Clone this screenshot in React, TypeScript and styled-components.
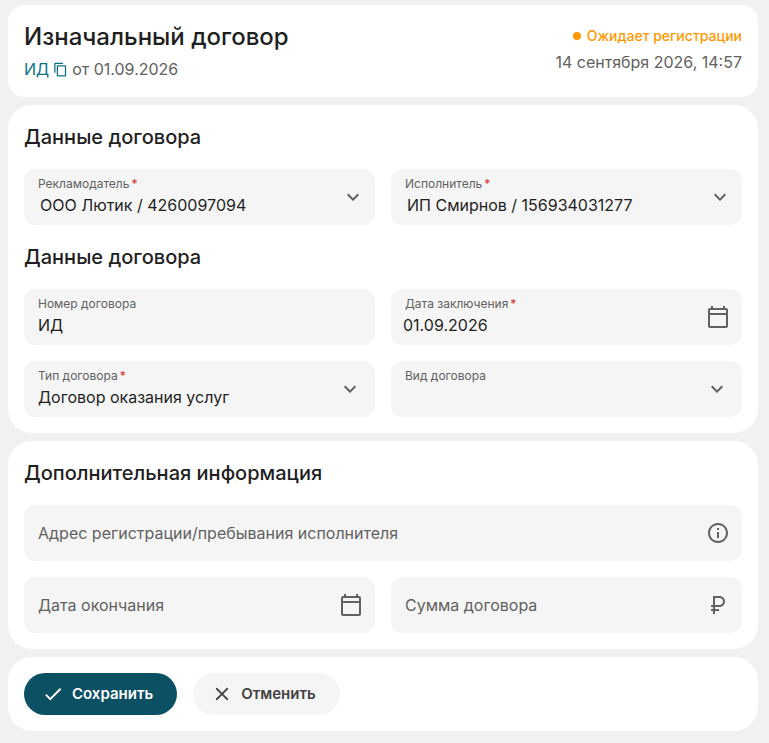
import React, { useId, useState } from "react";
import styled, { createGlobalStyle } from "styled-components";

const GlobalStyle = createGlobalStyle`
  *, *::before, *::after { box-sizing: border-box; }
  body {
    margin: 0;
    background: #f1f1f1;
    color: #1f1f1f;
    font-family: Inter, "Liberation Sans", sans-serif;
    font-size: 16px;
    line-height: 24px;
  }
`;

const Page = styled.main`
  display: flex;
  flex-direction: column;
  gap: 8px;
  padding: 5px 11px 12px 8px;
`;

const Card = styled.section`
  display: flex;
  flex-direction: column;
  gap: 16px;
  padding: 16px;
  border-radius: 24px;
  background: #fff;
`;

const HeaderCard = styled.header`
  display: flex;
  justify-content: space-between;
  gap: 16px;
  padding: 16px;
  border-radius: 16px;
  background: #fff;
`;

const HeaderColumn = styled.div<{ $end?: boolean }>`
  display: flex;
  flex-direction: column;
  align-items: ${({ $end }) => ($end ? "flex-end" : "flex-start")};
  gap: ${({ $end }) => ($end ? 2 : 4)}px;
  padding-top: ${({ $end }) => ($end ? 3 : 0)}px;
`;

const Title = styled.h1`
  margin: 0;
  font-size: 24px;
  font-weight: 500;
  line-height: 32px;
`;

const Subtitle = styled.div`
  display: flex;
  align-items: center;
  gap: 4px;
  color: #616161;
`;

const ContractLink = styled.a`
  color: #0b7285;
  text-decoration: none;
`;

const CopyButton = styled.button`
  display: flex;
  padding: 0;
  border: 0;
  background: none;
  color: #0b7285;
  cursor: pointer;
`;

const Status = styled.span`
  display: flex;
  align-items: center;
  gap: 6px;
  color: #ff9800;
  font-size: 14px;
  font-weight: 500;
`;

const Dot = styled.span`
  width: 8px;
  height: 8px;
  border-radius: 50%;
  background: currentColor;
`;

const Timestamp = styled.time`
  color: #616161;
`;

const SectionTitle = styled.h2`
  margin: 0;
  font-size: 20px;
  font-weight: 500;
  line-height: 32px;
`;

const FieldGrid = styled.div`
  display: grid;
  grid-template-columns: repeat(2, minmax(0, 1fr));
  gap: 16px;
`;

const FieldBox = styled.div<{ $wide?: boolean }>`
  position: relative;
  grid-column: ${({ $wide }) => ($wide ? "1 / -1" : "auto")};
  height: 56px;
  border-radius: 12px;
  background: #f5f5f5;
`;

const FieldLabel = styled.label<{ $raised: boolean }>`
  position: absolute;
  left: 14px;
  top: ${({ $raised }) => ($raised ? 7 : 16)}px;
  font-size: ${({ $raised }) => ($raised ? 12 : 16)}px;
  line-height: ${({ $raised }) => ($raised ? 16 : 24)}px;
  color: #616161;
  pointer-events: none;
`;

const Required = styled.span`
  margin-left: 2px;
  color: #d32f2f;
`;

const TextInput = styled.input<{ $indent: number }>`
  display: block;
  width: 100%;
  height: 56px;
  padding: 24px 48px 8px ${({ $indent }) => $indent}px;
  border: 0;
  border-radius: inherit;
  outline-color: #0c5064;
  background: transparent;
  color: inherit;
  font: inherit;
`;

const SelectInput = styled.select<{ $indent: number }>`
  display: block;
  width: 100%;
  height: 56px;
  padding: 24px 48px 8px ${({ $indent }) => $indent}px;
  border: 0;
  border-radius: inherit;
  outline-color: #0c5064;
  background: transparent;
  color: inherit;
  font: inherit;
  appearance: none;
`;

const Adornment = styled.span<{ $right: number }>`
  position: absolute;
  top: 16px;
  right: ${({ $right }) => $right}px;
  display: flex;
  color: #616161;
  pointer-events: none;
`;

const AdornmentButton = styled.button`
  position: absolute;
  top: 16px;
  right: 12px;
  display: flex;
  padding: 0;
  border: 0;
  background: none;
  color: #616161;
  cursor: pointer;
`;

const Actions = styled.footer`
  display: flex;
  flex-wrap: wrap;
  gap: 16px;
  padding: 16px;
  border-radius: 24px;
  background: #fff;
`;

const ActionButton = styled.button<{ $primary?: boolean }>`
  display: flex;
  align-items: center;
  gap: 8px;
  height: 42px;
  padding: 0 24px 0 18px;
  border: 0;
  border-radius: 21px;
  background: ${({ $primary }) => ($primary ? "#0c5064" : "#f5f5f5")};
  color: ${({ $primary }) => ($primary ? "#fff" : "#424242")};
  font: inherit;
  font-size: 15px;
  font-weight: 600;
  cursor: pointer;
`;

const paths = {
  copy: "M16 1H4c-1.1 0-2 .9-2 2v14h2V3h12V1zm3 4H8c-1.1 0-2 .9-2 2v14c0 1.1.9 2 2 2h11c1.1 0 2-.9 2-2V7c0-1.1-.9-2-2-2zm0 16H8V7h11v14z",
  chevron: "M16.59 8.59 12 13.17 7.41 8.59 6 10l6 6 6-6z",
  calendar:
    "M20 3h-1V1h-2v2H7V1H5v2H4c-1.1 0-2 .9-2 2v16c0 1.1.9 2 2 2h16c1.1 0 2-.9 2-2V5c0-1.1-.9-2-2-2zm0 18H4V10h16v11zm0-13H4V5h16v3z",
  info: "M11 7h2v2h-2zm0 4h2v6h-2zm1-9C6.48 2 2 6.48 2 12s4.48 10 10 10 10-4.48 10-10S17.52 2 12 2zm0 18c-4.41 0-8-3.59-8-8s3.59-8 8-8 8 3.59 8 8-3.59 8-8 8z",
  ruble:
    "M13.5 3H7v9H5v2h2v2H5v2h2v3h2v-3h4v-2H9v-2h4.5c3.04 0 5.5-2.46 5.5-5.5S16.54 3 13.5 3zm0 9H9V5h4.5C15.43 5 17 6.57 17 8.5S15.43 12 13.5 12z",
  check: "M9 16.17 4.83 12l-1.42 1.41L9 19 21 7l-1.41-1.41z",
  close:
    "M19 6.41 17.59 5 12 10.59 6.41 5 5 6.41 10.59 12 5 17.59 6.41 19 12 13.41 17.59 19 19 17.59 13.41 12z",
};

type IconName = keyof typeof paths;

function Icon({ name, size = 24 }: { name: IconName; size?: number }) {
  return (
    <svg width={size} height={size} viewBox="0 0 24 24" fill="currentColor" aria-hidden="true">
      <path d={paths[name]} />
    </svg>
  );
}

interface FieldProps {
  label: string;
  initial?: string;
  required?: boolean;
  wide?: boolean;
  indent?: number;
  icon?: IconName;
  iconLabel?: string;
}

function TextField({ label, initial = "", required, wide, indent = 14, icon, iconLabel }: FieldProps) {
  const id = useId();
  const [value, setValue] = useState(initial);
  return (
    <FieldBox $wide={wide}>
      <TextInput
        id={id}
        $indent={indent}
        value={value}
        required={required}
        onChange={(event) => setValue(event.target.value)}
      />
      <FieldLabel htmlFor={id} $raised={value !== ""}>
        {label}
        {required && <Required>*</Required>}
      </FieldLabel>
      {icon && iconLabel && (
        <AdornmentButton type="button" aria-label={iconLabel}>
          <Icon name={icon} />
        </AdornmentButton>
      )}
      {icon && !iconLabel && (
        <Adornment $right={12}>
          <Icon name={icon} />
        </Adornment>
      )}
    </FieldBox>
  );
}

interface SelectFieldProps {
  label: string;
  option?: string;
  required?: boolean;
  party?: boolean;
}

function SelectField({ label, option = "", required, party }: SelectFieldProps) {
  const id = useId();
  return (
    <FieldBox>
      <SelectInput id={id} $indent={party ? 16 : 14} defaultValue={option} required={required}>
        <option value={option}>{option}</option>
      </SelectInput>
      <FieldLabel htmlFor={id} $raised>
        {label}
        {required && <Required>*</Required>}
      </FieldLabel>
      <Adornment $right={party ? 10 : 13}>
        <Icon name="chevron" />
      </Adornment>
    </FieldBox>
  );
}

export default function App() {
  return (
    <>
      <GlobalStyle />
      <Page>
        <HeaderCard>
          <HeaderColumn>
            <Title>Изначальный договор</Title>
            <Subtitle>
              <ContractLink href="#contract">ИД</ContractLink>
              <CopyButton type="button" aria-label="Скопировать номер">
                <Icon name="copy" size={15} />
              </CopyButton>
              <span>от 01.09.2026</span>
            </Subtitle>
          </HeaderColumn>
          <HeaderColumn $end>
            <Status>
              <Dot />
              Ожидает регистрации
            </Status>
            <Timestamp dateTime="2026-09-14T14:57">14 сентября 2026, 14:57</Timestamp>
          </HeaderColumn>
        </HeaderCard>

        <Card>
          <SectionTitle>Данные договора</SectionTitle>
          <FieldGrid>
            <SelectField label="Рекламодатель" option="ООО Лютик / 4260097094" required party />
            <SelectField label="Исполнитель" option="ИП Смирнов / 156934031277" required party />
          </FieldGrid>
          <SectionTitle>Данные договора</SectionTitle>
          <FieldGrid>
            <TextField label="Номер договора" initial="ИД" />
            <TextField
              label="Дата заключения"
              initial="01.09.2026"
              required
              indent={12}
              icon="calendar"
              iconLabel="Выбрать дату заключения"
            />
            <SelectField label="Тип договора" option="Договор оказания услуг" required />
            <SelectField label="Вид договора" />
          </FieldGrid>
        </Card>

        <Card>
          <SectionTitle>Дополнительная информация</SectionTitle>
          <FieldGrid>
            <TextField
              label="Адрес регистрации/пребывания исполнителя"
              wide
              icon="info"
              iconLabel="Подсказка об адресе"
            />
            <TextField label="Дата окончания" icon="calendar" iconLabel="Выбрать дату окончания" />
            <TextField label="Сумма договора" icon="ruble" />
          </FieldGrid>
        </Card>

        <Actions>
          <ActionButton type="button" $primary>
            <Icon name="check" size={22} />
            Сохранить
          </ActionButton>
          <ActionButton type="button">
            <Icon name="close" size={22} />
            Отменить
          </ActionButton>
        </Actions>
      </Page>
    </>
  );
}
